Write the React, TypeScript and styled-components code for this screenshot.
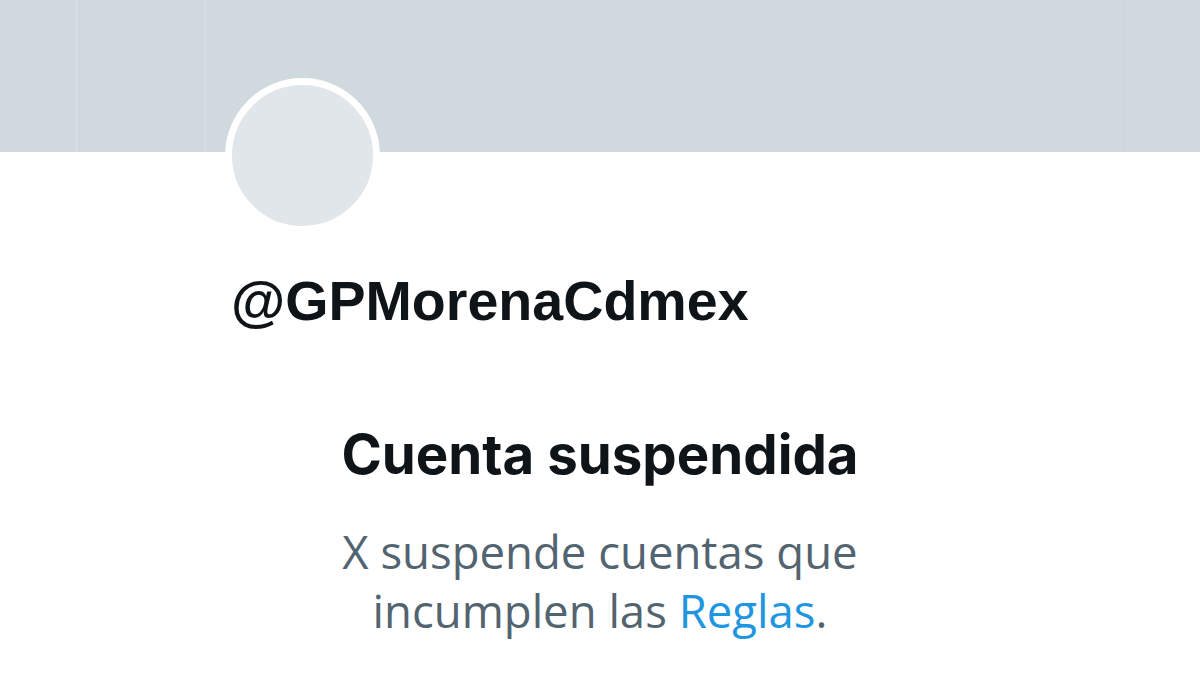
import React from 'react';
import styled, { createGlobalStyle } from 'styled-components';

const GlobalStyle = createGlobalStyle`
  html, body {
    margin: 0;
    padding: 0;
    background: #ffffff;
  }
  body {
    width: 1200px;
    height: 700px;
    overflow: hidden;
  }
`;

const Page = styled.div`
  width: 1200px;
  height: 700px;
  background: #ffffff;
`;

const Banner = styled.div`
  height: 152px;
  background: #cfd9de;
  display: grid;
  grid-template-columns: 77px 129px 918px 1fr;
`;

const BannerTile = styled.div<{ $edge?: string }>`
  border-right: 1px solid ${(p) => p.$edge || 'transparent'};
`;

const Profile = styled.div`
  padding-left: 225px;
`;

const Avatar = styled.div`
  width: 141px;
  height: 141px;
  margin-top: -74px;
  border-radius: 50%;
  border: 7px solid #ffffff;
  background: #e1e6ea;
`;

const Handle = styled.div`
  margin: 38px 0 0 6px;
  font-family: 'Liberation Sans', Arial, sans-serif;
  font-weight: 700;
  font-size: 55.6px;
  line-height: 60px;
  color: #0f1419;
`;

const Notice = styled.div`
  width: 540px;
  margin: 93px auto 0;
  text-align: center;
`;

const Title = styled.h1`
  margin: 0;
  font-family: Inter, 'Open Sans', sans-serif;
  font-weight: 700;
  font-size: 54.6px;
  line-height: 60px;
  color: #0f1419;
`;

const Body = styled.p`
  margin: 38px 0 0;
  font-family: 'Open Sans', sans-serif;
  font-weight: 400;
  font-size: 45.5px;
  line-height: 59px;
  color: #536471;
`;

const RulesLink = styled.a`
  color: #2196e0;
  text-decoration: none;
`;

export default function App() {
  return (
    <Page>
      <GlobalStyle />
      <Banner>
        <BannerTile $edge="#d9e1e5" />
        <BannerTile $edge="#d9e1e5" />
        <BannerTile $edge="#cbd5d9" />
        <BannerTile />
      </Banner>
      <Profile>
        <Avatar />
        <Handle>@GPMorenaCdmex</Handle>
      </Profile>
      <Notice>
        <Title>Cuenta suspendida</Title>
        <Body>
          X suspende cuentas que
          <br />
          incumplen las <RulesLink href="#">Reglas</RulesLink>.
        </Body>
      </Notice>
    </Page>
  );
}
